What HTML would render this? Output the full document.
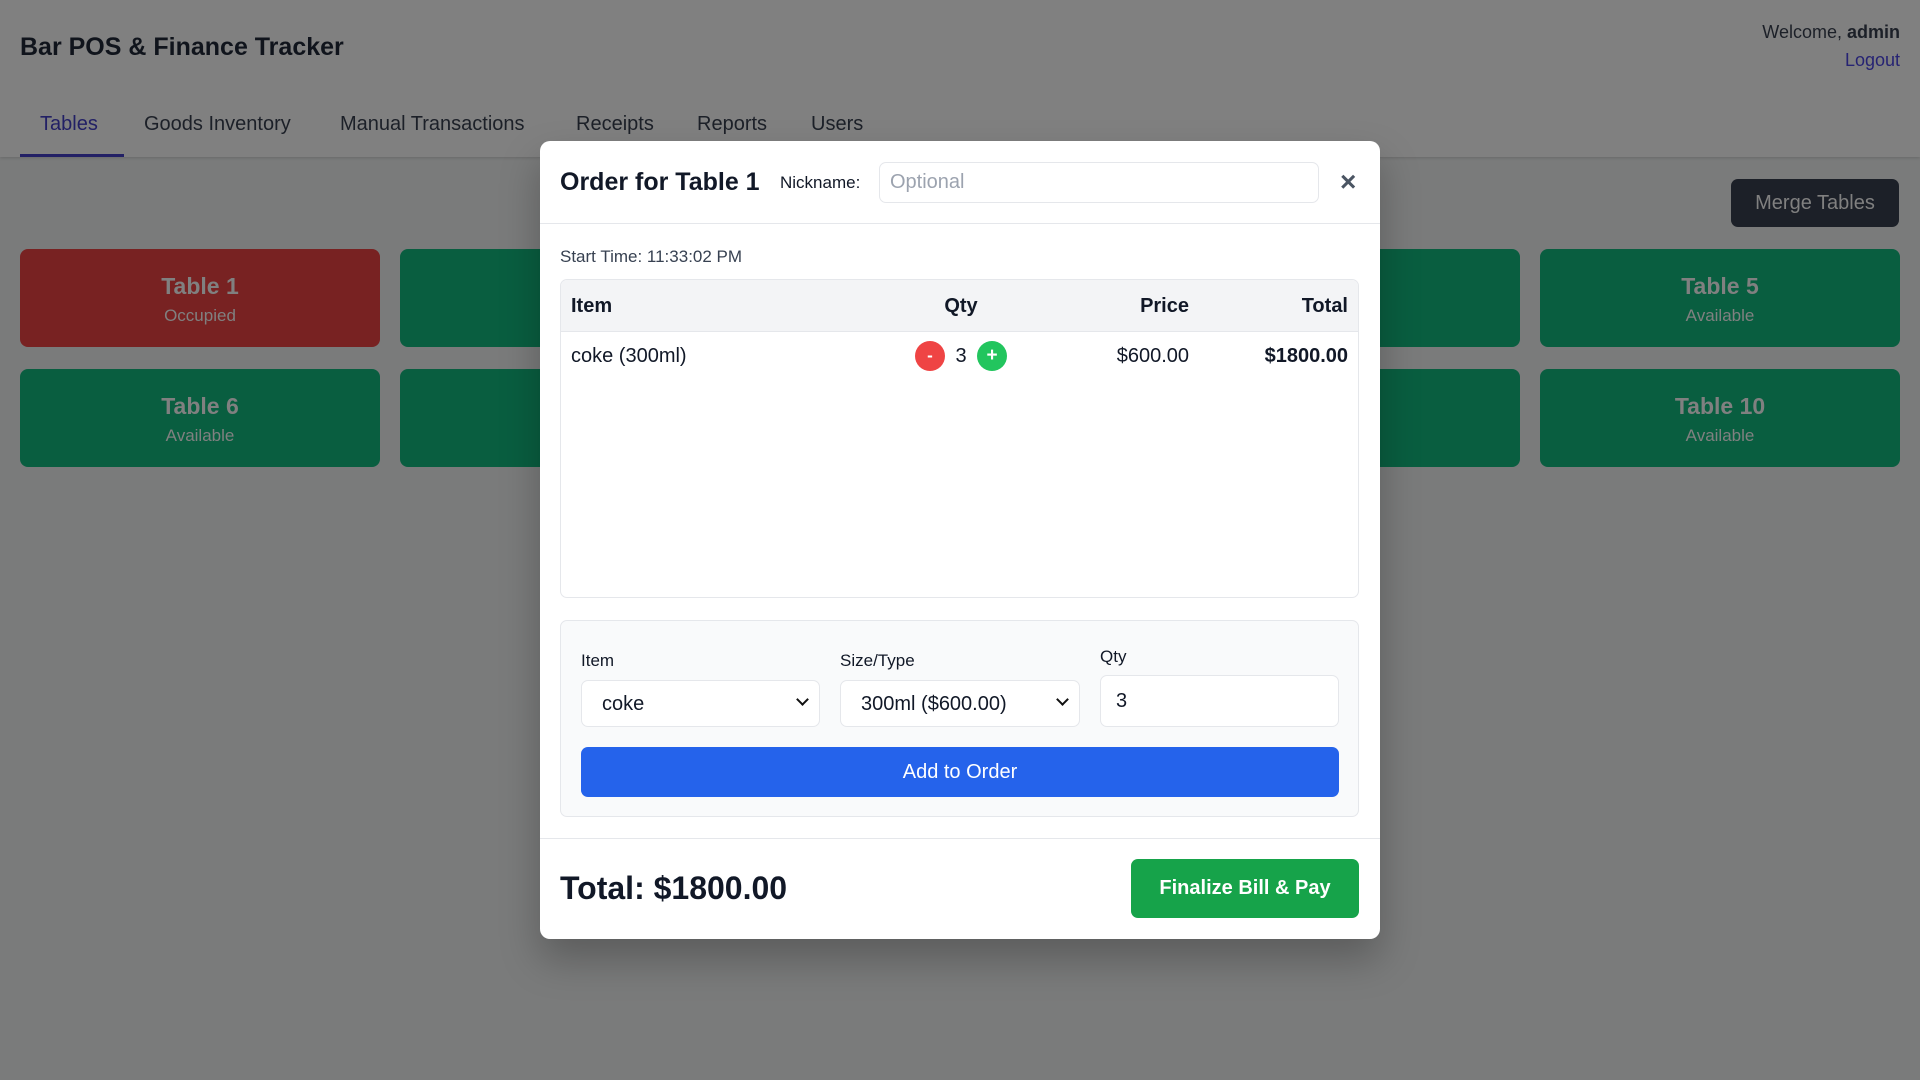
<!DOCTYPE html>
<html><head><meta charset="utf-8"><style>
*{box-sizing:border-box;margin:0;padding:0}
body{width:1920px;height:1080px;position:relative;overflow:hidden;background:#7a7b7b;font-family:"Liberation Sans",sans-serif;color:#111827}
.a{position:absolute}
.hdr{left:0;top:0;width:1920px;height:157px;background:#808080;box-shadow:0 1px 3px rgba(0,0,0,.15)}
.tab{top:113px;font-size:20px;color:#1c2028}
.card{width:360px;height:98px;border-radius:8px;color:#808080;text-align:center}
.card b{display:block;font-size:23px;margin-top:24px}
.card span{display:block;font-size:17px;margin-top:6px}
.g{background:#095e40}.r{background:#782222}
.m{left:540px;top:141px;width:840px;height:798px;background:#fff;border-radius:10px;box-shadow:0 20px 40px rgba(0,0,0,.25)}
.inp{background:#fff;border:1px solid #e5e7eb;border-radius:7px}
.lbl{font-size:17px;color:#111827}
.sel{font-size:20px;padding-left:20px;line-height:46px}
.chev{position:absolute;right:12px;top:14px;width:9px;height:9px;border-right:2px solid #111;border-bottom:2px solid #111;transform:rotate(45deg)}
</style></head><body>
<div class="a hdr"></div>
<div class="a" style="left:20px;top:33px;font-size:25px;font-weight:bold;color:#10141c">Bar POS &amp; Finance Tracker</div>
<div class="a" style="right:20px;top:22px;font-size:18px;color:#1c2028">Welcome, <b>admin</b></div>
<div class="a" style="right:20px;top:50px;font-size:18px;color:#262373">Logout</div>
<div class="a tab" style="left:40px;color:#222065">Tables</div>
<div class="a" style="left:20px;top:154px;width:104px;height:3px;background:#222065"></div>
<div class="a tab" style="left:144px">Goods Inventory</div>
<div class="a tab" style="left:340px">Manual Transactions</div>
<div class="a tab" style="left:576px">Receipts</div>
<div class="a tab" style="left:697px">Reports</div>
<div class="a tab" style="left:811px">Users</div>
<div class="a" style="left:1731px;top:179px;width:168px;height:48px;background:#1c2028;color:#808080;border-radius:7px;font-size:20px;text-align:center;line-height:48px">Merge Tables</div>
<div class="a card r" style="left:20px;top:249px"><b>Table 1</b><span>Occupied</span></div>
<div class="a card g" style="left:400px;top:249px"></div>
<div class="a card g" style="left:1160px;top:249px"></div>
<div class="a card g" style="left:1540px;top:249px"><b>Table 5</b><span>Available</span></div>
<div class="a card g" style="left:20px;top:369px"><b>Table 6</b><span>Available</span></div>
<div class="a card g" style="left:400px;top:369px"></div>
<div class="a card g" style="left:1160px;top:369px"></div>
<div class="a card g" style="left:1540px;top:369px"><b>Table 10</b><span>Available</span></div>
<div class="a m">
 <div class="a" style="left:20px;top:27px;font-size:25px;font-weight:bold">Order for Table 1</div>
 <div class="a" style="left:240px;top:32px;font-size:17px">Nickname:</div>
 <div class="a inp" style="left:339px;top:21px;width:440px;height:41px;font-size:20px;color:#9ca3af;padding-left:10px;line-height:39px">Optional</div>
 <div class="a" style="left:800px;top:25px;font-size:28px;font-weight:bold;color:#4b5563">×</div>
 <div class="a" style="left:0;top:82px;width:840px;height:1px;background:#e5e7eb"></div>
 <div class="a" style="left:20px;top:106px;font-size:17px;color:#374151">Start Time: 11:33:02 PM</div>
 <div class="a" style="left:20px;top:138px;width:799px;height:319px;border:1px solid #e5e7eb;border-radius:7px;overflow:hidden">
  <div class="a" style="left:0;top:0;width:799px;height:52px;background:#f3f4f6;border-bottom:1px solid #e5e7eb"></div>
  <div class="a" style="left:10px;top:15px;font-size:20px;font-weight:bold">Item</div>
  <div class="a" style="left:350px;width:100px;text-align:center;top:15px;font-size:20px;font-weight:bold">Qty</div>
  <div class="a" style="right:169px;top:15px;font-size:20px;font-weight:bold">Price</div>
  <div class="a" style="right:10px;top:15px;font-size:20px;font-weight:bold">Total</div>
  <div class="a" style="left:10px;top:65px;font-size:20px">coke (300ml)</div>
  <div class="a" style="left:354px;top:61px;width:30px;height:30px;border-radius:50%;background:#ef4444;color:#fff;text-align:center;line-height:29px;font-size:17px;font-weight:bold">-</div>
  <div class="a" style="left:390px;width:20px;text-align:center;top:65px;font-size:20px">3</div>
  <div class="a" style="left:416px;top:61px;width:30px;height:30px;border-radius:50%;background:#22c55e;color:#fff;text-align:center;line-height:29px;font-size:19px;font-weight:bold">+</div>
  <div class="a" style="right:169px;top:65px;font-size:20px">$600.00</div>
  <div class="a" style="right:10px;top:65px;font-size:20px;font-weight:bold">$1800.00</div>
 </div>
 <div class="a" style="left:20px;top:479px;width:799px;height:197px;background:#f9fafb;border:1px solid #e5e7eb;border-radius:7px">
  <div class="a lbl" style="left:20px;top:30px">Item</div>
  <div class="a lbl" style="left:279px;top:30px">Size/Type</div>
  <div class="a lbl" style="left:539px;top:26px">Qty</div>
  <div class="a inp sel" style="left:20px;top:59px;width:239px;height:47px">coke<i class="chev"></i></div>
  <div class="a inp sel" style="left:279px;top:59px;width:240px;height:47px">300ml ($600.00)<i class="chev"></i></div>
  <div class="a inp sel" style="left:539px;top:54px;width:239px;height:52px;padding-left:15px;line-height:50px">3</div>
  <div class="a" style="left:20px;top:126px;width:758px;height:50px;background:#2563eb;border-radius:7px;color:#fff;font-size:20px;text-align:center;line-height:50px">Add to Order</div>
 </div>
 <div class="a" style="left:0;top:697px;width:840px;height:1px;background:#e5e7eb"></div>
 <div class="a" style="left:20px;top:729px;font-size:32px;font-weight:bold">Total: $1800.00</div>
 <div class="a" style="left:591px;top:718px;width:228px;height:59px;background:#16a34a;border-radius:7px;color:#fff;font-size:20px;font-weight:bold;text-align:center;line-height:59px">Finalize Bill &amp; Pay</div>
</div>
</body></html>
